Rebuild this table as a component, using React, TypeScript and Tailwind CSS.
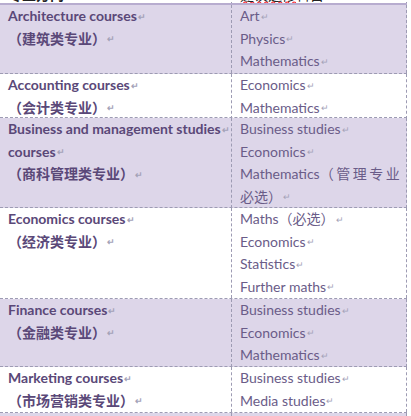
type Row = {
  shaded: boolean;
  h: string;
  left: string[];
  right: React.ReactNode[];
};

const rows: Row[] = [
  {
    shaded: true,
    h: "h-[69px]",
    left: ["Architecture courses", "（建筑类专业）"],
    right: ["Art", "Physics", "Mathematics"],
  },
  {
    shaded: false,
    h: "h-[44px]",
    left: ["Accounting courses", "（会计类专业）"],
    right: ["Economics", "Mathematics"],
  },
  {
    shaded: true,
    h: "h-[90px]",
    left: ["Business and management studies", "courses", "（商科管理类专业）"],
    right: ["Business studies", "Economics", null, "必选）"],
  },
  {
    shaded: false,
    h: "h-[91px]",
    left: ["Economics courses", "（经济类专业）"],
    right: ["Maths（必选）", "Economics", "Statistics", "Further maths"],
  },
  {
    shaded: true,
    h: "h-[68px]",
    left: ["Finance courses", "（金融类专业）"],
    right: ["Business studies", "Economics", "Mathematics"],
  },
  {
    shaded: false,
    h: "h-[46px]",
    left: ["Marketing courses", "（市场营销类专业）"],
    right: ["Business studies", "Media studies"],
  },
];

function Mark() {
  return <span className="text-[9px] leading-none text-[#a4a2b8] ml-[1px]">↵</span>;
}

function Line({ children, mark = true }: { children: React.ReactNode; mark?: boolean }) {
  return (
    <div className="h-[22.5px] flex items-center whitespace-nowrap leading-none">
      <span>{children}</span>
      {mark && <Mark />}
    </div>
  );
}

export default function App() {
  return (
    <div className="w-[411px] h-[416px] overflow-hidden bg-white font-['Lato','Noto_Sans_CJK_SC',sans-serif] text-[14px]">
      <div className="w-[407px]">
        {/* cut-off header row */}
        <div className="grid grid-cols-[232px_175px] h-[5px] overflow-hidden border-b-2 border-[#b7accf] leading-[20px]">
          <div className="border-r border-dashed border-[#9d9bb3] pl-2 -mt-[15px] font-bold text-[#222]">
            专业方向
          </div>
          <div className="border-r border-dashed border-[#9d9bb3] pl-2 -mt-[15px] text-[#222]">
            <span className="underline decoration-wavy decoration-red-500">建议选修</span>科目
          </div>
        </div>

        {rows.map((r, i) => (
          <div
            key={i}
            className={`grid grid-cols-[232px_175px] ${r.h} border-b border-dashed border-[#9d9bb3] ${
              r.shaded ? "bg-[#ddd6e9]" : "bg-white"
            }`}
          >
            <div className="border-r border-dashed border-[#9d9bb3] pl-2 font-bold text-[#5a4878]">
              {r.left.map((t, j) => (
                <Line key={j}>{t}</Line>
              ))}
            </div>
            <div className="border-r border-dashed border-[#9d9bb3] pl-2 text-[#6a5c88]">
              {r.right.map((t, j) =>
                t === null ? (
                  <Line key={j} mark={false}>
                    Mathematics<span className="tracking-[2.5px]">（管理专业</span>
                  </Line>
                ) : (
                  <Line key={j}>{t}</Line>
                )
              )}
            </div>
          </div>
        ))}

        <div className="grid grid-cols-[232px_175px] h-[10px] bg-[#ddd6e9]">
          <div className="border-r border-dashed border-[#9d9bb3]" />
          <div className="border-r border-dashed border-[#9d9bb3]" />
        </div>
      </div>
    </div>
  );
}
